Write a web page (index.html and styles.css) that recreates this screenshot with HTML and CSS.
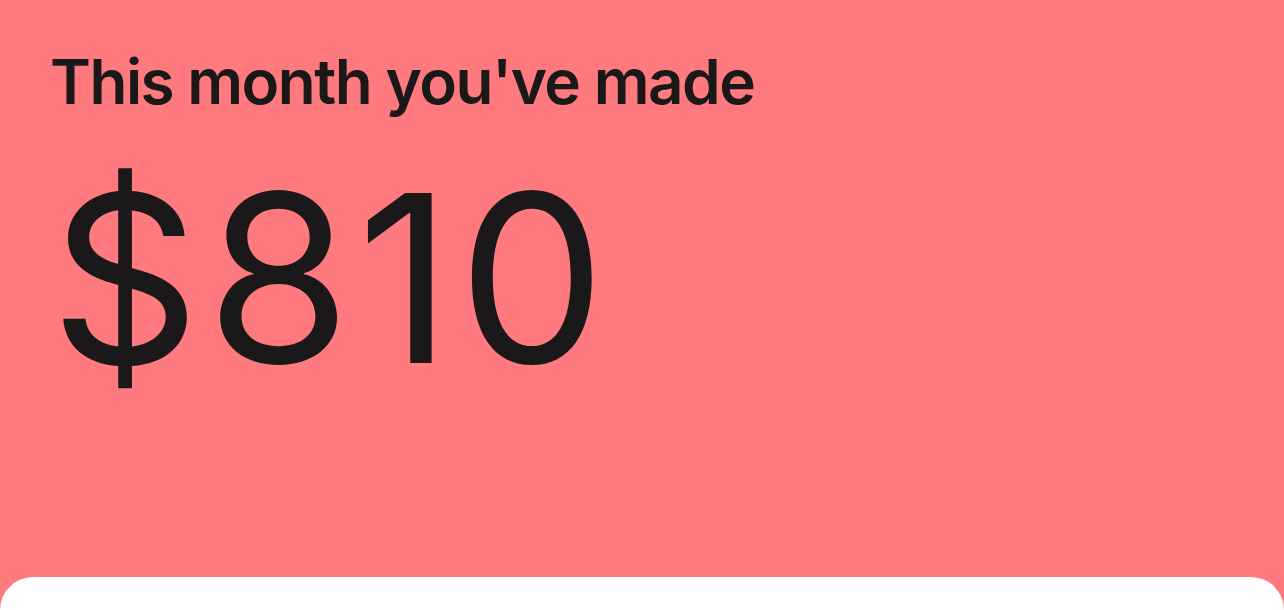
FILE: index.html
```html
<!DOCTYPE html>
<html lang="en">
<head>
    <meta charset="UTF-8">
    <meta name="viewport" content="width=device-width, initial-scale=1.0">
    <title>Earnings</title>
    <link rel="stylesheet" href="styles.css">
</head>
<body>
    <div class="summary">
        <h1 class="summary-title">This month you've made</h1>
        <p class="summary-amount">$810</p>
    </div>
    <div class="sheet"></div>
</body>
</html>
```

FILE: styles.css
```css
body {
    margin: 0;
    font-family: Inter, "Noto Sans", sans-serif;
    background: #ff7a7f;
    color: #1a1818;
    height: 100vh;
    overflow: hidden;
    display: flex;
    flex-direction: column;
}

.summary {
    padding: 46px 50px 0;
    height: 577px;
    box-sizing: border-box;
    flex-shrink: 0;
}

.summary-title {
    margin: 0;
    font-size: 62px;
    line-height: 72px;
    font-weight: 600;
    letter-spacing: -1.5px;
}

.summary-amount {
    margin: 43px 0 0;
    font-size: 234px;
    line-height: 234px;
    font-weight: 400;
    letter-spacing: 6px;
}

.sheet {
    flex: 1;
    background: #ffffff;
    border-radius: 48px 48px 0 0;
}
```
